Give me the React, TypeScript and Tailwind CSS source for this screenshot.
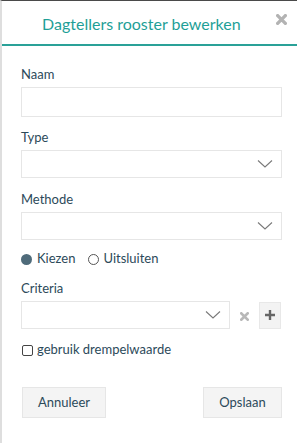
import React from "react";

const Chevron = () => (
  <svg width="16" height="9" viewBox="0 0 16 9" className="absolute right-[8px] top-1/2 -translate-y-1/2" fill="none">
    <path d="M1 1 L8 7.5 L15 1" stroke="#7a7a7a" strokeWidth="1.1" />
  </svg>
);

const XIcon = ({ size, color }: { size: number; color: string }) => (
  <svg width={size} height={size} viewBox="0 0 10 10">
    <path d="M1.5 1.5 L8.5 8.5 M8.5 1.5 L1.5 8.5" stroke={color} strokeWidth="3" strokeLinecap="square" />
  </svg>
);

const Select = ({ className = "" }: { className?: string }) => (
  <div className={"relative h-[28px] border border-[#e6e6e6] bg-white " + className}>
    <Chevron />
  </div>
);

export default function App() {
  const font = { fontFamily: "'Source Sans Pro', Lato, 'Noto Sans', sans-serif" };
  return (
    <div
      className="w-[297px] h-[443px] bg-white border-l-2 border-l-[#dedede] border-t border-t-[#4a4a4a] text-[13px] text-[#2c4a5a]"
      style={font}
    >
      <div className="relative h-[45px] border-b-2 border-b-[#2aa198] flex items-center pl-[40px]">
        <span className="text-[16px] text-[#1f9f97] leading-none mt-[2px]">Dagtellers rooster bewerken</span>
        <span className="absolute right-[10px] top-[13px]">
          <XIcon size={11} color="#b3b3b3" />
        </span>
      </div>
      <div className="pl-[19px] pr-[15px] pt-[19px]">
        <div className="leading-[18px] mb-[4px]">Naam</div>
        <div className="h-[30px] border border-[#e6e6e6]" />
        <div className="leading-[18px] mt-[11px] mb-[4px]">Type</div>
        <Select />
        <div className="leading-[18px] mt-[12px] mb-[4px]">Methode</div>
        <Select />
        <div className="flex items-center h-[18px] mt-[10px]">
          <span className="w-[11px] h-[11px] rounded-full bg-[#4f6b7a]" />
          <span className="ml-[5px]">Kiezen</span>
          <span className="ml-[13px] w-[11px] h-[11px] rounded-full border border-[#555]" />
          <span className="ml-[4px]">Uitsluiten</span>
        </div>
        <div className="leading-[18px] mt-[11px] mb-[4px]">Criteria</div>
        <div className="flex items-center">
          <Select className="w-[209px]" />
          <span className="ml-[10px] mt-[2px]">
            <XIcon size={9} color="#b8b8b8" />
          </span>
          <div className="ml-[10px] w-[22px] h-[27px] bg-[#f3f3f3] border border-[#e8e8e8] flex items-center justify-center">
            <svg width="10" height="10" viewBox="0 0 10 10">
              <path d="M5 0 V10 M0 5 H10" stroke="#666" strokeWidth="2.4" />
            </svg>
          </div>
        </div>
        <div className="flex items-center mt-[12px] h-[18px]">
          <span className="ml-[1px] w-[11px] h-[11px] rounded-[2px] border border-[#444]" />
          <span className="ml-[4px]">gebruik drempelwaarde</span>
        </div>
        <div className="flex justify-between mt-[28px] pl-[1px]">
          <button className="w-[84px] h-[31px] bg-[#f4f4f4] border border-[#e6e6e6] text-[13px] text-[#2c4a5a]">Annuleer</button>
          <button className="w-[79px] h-[31px] bg-[#f4f4f4] border border-[#e6e6e6] text-[13px] text-[#2c4a5a]">Opslaan</button>
        </div>
      </div>
    </div>
  );
}
